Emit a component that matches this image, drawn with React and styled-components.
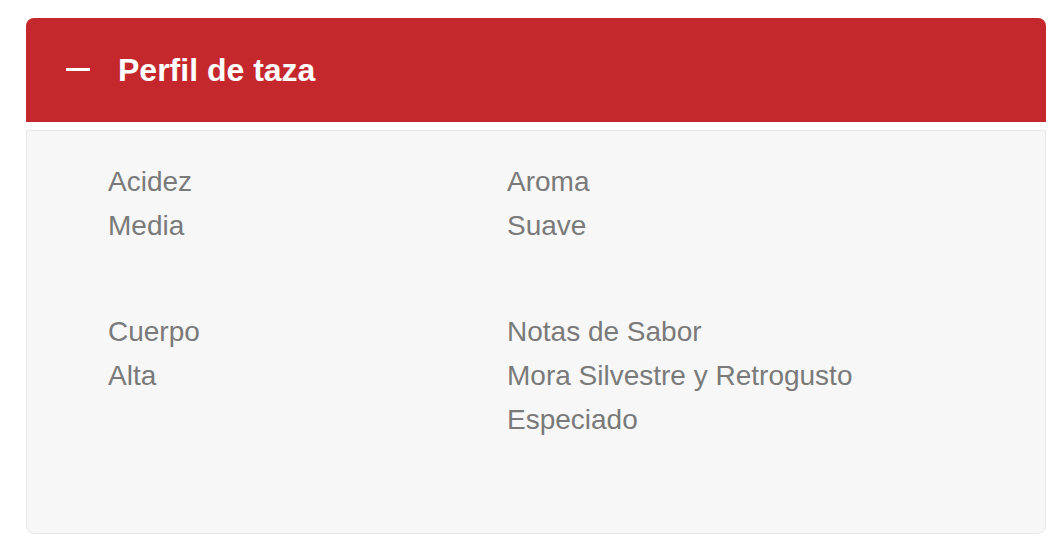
import React from "react";
import styled, { createGlobalStyle } from "styled-components";

const GlobalStyle = createGlobalStyle`
  html, body { margin: 0; padding: 0; background: #ffffff; }
  body { font-family: "Liberation Sans", Arial, Helvetica, sans-serif; }
  * { box-sizing: border-box; }
`;

const Page = styled.div`
  padding: 18px 16px 0 26px;
`;

const Accordion = styled.section`
  display: flex;
  flex-direction: column;
  gap: 8px;
`;

const Header = styled.button`
  display: flex;
  align-items: center;
  gap: 28px;
  height: 104px;
  width: 100%;
  padding: 0 0 0 40px;
  border: none;
  border-radius: 8px 8px 0 0;
  background: #c4282c;
  color: #ffffff;
  font-family: "Liberation Sans", Arial, Helvetica, sans-serif;
  font-weight: 700;
  font-size: 32px;
  text-align: left;
  cursor: pointer;
`;

const MinusIcon = styled.span`
  display: block;
  width: 24px;
  height: 3px;
  background: #ffffff;
  margin-top: -1px;
`;

const Title = styled.span`
  line-height: 1;
`;

const Body = styled.div`
  background: #f7f7f7;
  border: 1px solid #e8e8e8;
  border-radius: 0 0 8px 8px;
  padding: 29px 0 29px 81px;
`;

const Row = styled.div`
  display: grid;
  grid-template-columns: 399px 1fr;
  margin-bottom: 62px;
`;

const Cell = styled.div`
  display: flex;
  flex-direction: column;
`;

const Line = styled.span`
  font-size: 28px;
  line-height: 44px;
  color: #7a7a7a;
`;

const rows = [
  [
    { label: "Acidez", value: ["Media"] },
    { label: "Aroma", value: ["Suave"] },
  ],
  [
    { label: "Cuerpo", value: ["Alta"] },
    { label: "Notas de Sabor", value: ["Mora Silvestre y Retrogusto", "Especiado"] },
  ],
];

export default function App() {
  return (
    <>
      <GlobalStyle />
      <Page>
        <Accordion>
          <Header type="button">
            <MinusIcon />
            <Title>Perfil de taza</Title>
          </Header>
          <Body>
            {rows.map((row, i) => (
              <Row key={i}>
                {row.map((cell) => (
                  <Cell key={cell.label}>
                    <Line>{cell.label}</Line>
                    {cell.value.map((v) => (
                      <Line key={v}>{v}</Line>
                    ))}
                  </Cell>
                ))}
              </Row>
            ))}
          </Body>
        </Accordion>
      </Page>
    </>
  );
}
